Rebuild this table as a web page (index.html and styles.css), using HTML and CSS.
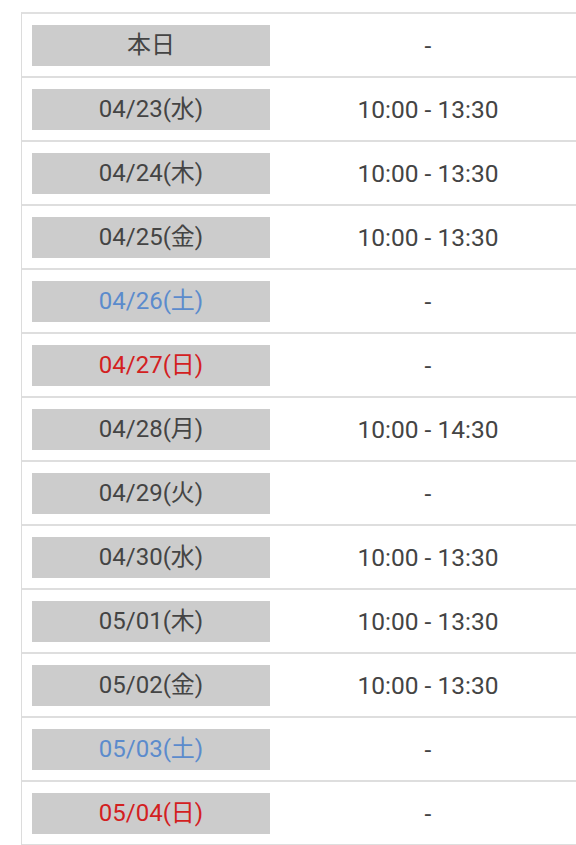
FILE: index.html
```html
<!DOCTYPE html>
<html lang="ja">
<head>
<meta charset="utf-8">
<link rel="stylesheet" href="styles.css">
</head>
<body>
<div class="schedule">
  <div class="row"><div class="day"><span class="label">本日</span></div><div class="time">-</div></div>
  <div class="row"><div class="day"><span class="label">04/23(水)</span></div><div class="time">10:00 - 13:30</div></div>
  <div class="row"><div class="day"><span class="label">04/24(木)</span></div><div class="time">10:00 - 13:30</div></div>
  <div class="row"><div class="day"><span class="label">04/25(金)</span></div><div class="time">10:00 - 13:30</div></div>
  <div class="row"><div class="day"><span class="label sat">04/26(土)</span></div><div class="time">-</div></div>
  <div class="row"><div class="day"><span class="label sun">04/27(日)</span></div><div class="time">-</div></div>
  <div class="row"><div class="day"><span class="label">04/28(月)</span></div><div class="time">10:00 - 14:30</div></div>
  <div class="row"><div class="day"><span class="label">04/29(火)</span></div><div class="time">-</div></div>
  <div class="row"><div class="day"><span class="label">04/30(水)</span></div><div class="time">10:00 - 13:30</div></div>
  <div class="row"><div class="day"><span class="label">05/01(木)</span></div><div class="time">10:00 - 13:30</div></div>
  <div class="row"><div class="day"><span class="label">05/02(金)</span></div><div class="time">10:00 - 13:30</div></div>
  <div class="row"><div class="day"><span class="label sat">05/03(土)</span></div><div class="time">-</div></div>
  <div class="row"><div class="day"><span class="label sun">05/04(日)</span></div><div class="time">-</div></div>
</div>
</body>
</html>
```
FILE: styles.css
```css
html, body {
  margin: 0;
  padding: 0;
  background: #ffffff;
}
body {
  font-family: Roboto, "Noto Sans CJK JP", sans-serif;
  color: #444444;
  overflow: hidden;
}
.schedule {
  margin: 12px 0 0 21px;
  border-left: 1px solid #dcdcdc;
  border-top: 2px solid #e0e0e0;
}
.row {
  display: grid;
  grid-template-columns: 258px 1fr;
  height: 62px;
  border-bottom: 2px solid #dedede;
}
.day {
  display: flex;
  align-items: center;
  padding-left: 10px;
}
.label {
  display: flex;
  align-items: center;
  justify-content: center;
  width: 238px;
  height: 41px;
  background: #cccccc;
  font-size: 24px;
  line-height: 1;
}
.label.sat { color: #5b8bcc; }
.label.sun { color: #d3201f; }
.time {
  display: flex;
  align-items: center;
  justify-content: center;
  font-size: 24.5px;
}
```
